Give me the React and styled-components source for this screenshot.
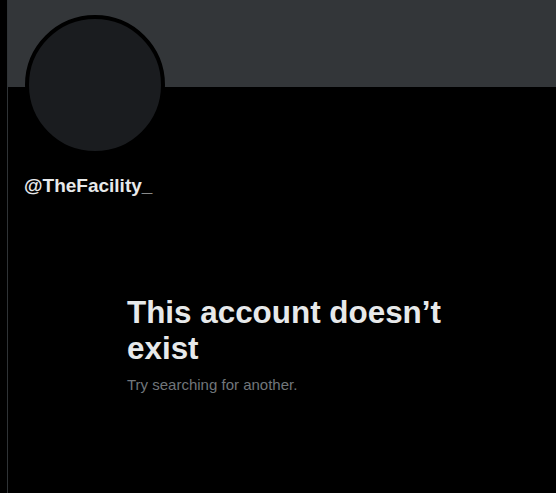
import React from "react";
import styled, { createGlobalStyle } from "styled-components";

const Global = createGlobalStyle`
  html, body { margin: 0; padding: 0; background: #000; }
  body { font-family: "Liberation Sans", Arial, sans-serif; overflow: hidden; }
`;

const Page = styled.div`
  display: flex;
  width: 556px;
  height: 493px;
  background: #000;
  overflow: hidden;
`;

const Gutter = styled.div`
  width: 7px;
  flex: none;
`;

const Column = styled.main`
  flex: none;
  width: 600px;
  border-left: 1px solid #2f3336;
  display: flex;
  flex-direction: column;
`;

const Banner = styled.div`
  height: 87px;
  background: #333639;
`;

const ProfileHead = styled.div`
  padding: 0 16px;
  display: flex;
  flex-direction: column;
`;

const Avatar = styled.div`
  width: 132px;
  height: 132px;
  margin: -72px 0 0 1px;
  border-radius: 50%;
  background: #1a1c1f;
  border: 4px solid #000;
`;

const Handle = styled.div`
  margin-top: 20px;
  color: #e7e9ea;
  font-weight: 700;
  font-size: 19px;
  line-height: 22px;
`;

const Empty = styled.section`
  margin: 98px 0 0 119px;
  width: 340px;
  display: flex;
  flex-direction: column;
`;

const Title = styled.h2`
  margin: 0;
  color: #e7e9ea;
  font-weight: 800;
  font-size: 31.4px;
  line-height: 36px;
`;

const Sub = styled.p`
  margin: 8px 0 0;
  color: #71767b;
  font-size: 15px;
  line-height: 20px;
`;

export default function App() {
  return (
    <>
      <Global />
      <Page>
        <Gutter />
        <Column>
          <Banner />
          <ProfileHead>
            <Avatar />
            <Handle>@TheFacility_</Handle>
          </ProfileHead>
          <Empty>
            <Title>This account doesn’t exist</Title>
            <Sub>Try searching for another.</Sub>
          </Empty>
        </Column>
      </Page>
    </>
  );
}
